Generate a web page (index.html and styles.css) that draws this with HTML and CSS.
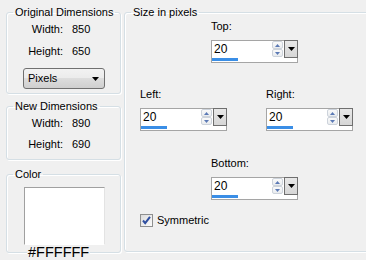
FILE: index.html
```html
<!DOCTYPE html>
<html lang="en">
<head>
  <meta charset="UTF-8">
  <title>Add Borders</title>
  <link rel="stylesheet" href="styles.css">
</head>
<body>
  <div class="left">
    <fieldset class="group g-orig">
      <legend>Original Dimensions</legend>
      <div class="dims">
        <span class="dim-label">Width:</span><span>850</span>
        <span class="dim-label">Height:</span><span>650</span>
      </div>
      <div class="select">
        <span>Pixels</span>
        <svg width="7" height="4" viewBox="0 0 7 4"><path d="M0 0h7L3.5 4z" fill="#000"/></svg>
      </div>
    </fieldset>

    <fieldset class="group g-new">
      <legend>New Dimensions</legend>
      <div class="dims">
        <span class="dim-label">Width:</span><span>890</span>
        <span class="dim-label">Height:</span><span>690</span>
      </div>
    </fieldset>

    <fieldset class="group g-color">
      <legend>Color</legend>
      <div class="swatch"></div>
      <span class="hex">#FFFFFF</span>
    </fieldset>
  </div>

  <fieldset class="group g-size">
    <legend>Size in pixels</legend>

    <div class="field field-top">
      <label>Top:</label>
      <div class="spin">
        <div class="spin-row">
          <span class="spin-text">20</span>
          <div class="spin-arrows">
            <span class="arrow"><svg width="5" height="3" viewBox="0 0 5 3"><path d="M2.5 0L5 3H0z"/></svg></span>
            <span class="arrow"><svg width="5" height="3" viewBox="0 0 5 3"><path d="M0 0h5L2.5 3z"/></svg></span>
          </div>
          <span class="spin-drop"><svg width="7" height="4" viewBox="0 0 7 4"><path d="M0 0h7L3.5 4z"/></svg></span>
        </div>
        <div class="spin-bar"><span class="fill"></span></div>
      </div>
    </div>

    <div class="row-mid">
      <div class="field">
        <label>Left:</label>
        <div class="spin">
          <div class="spin-row">
            <span class="spin-text">20</span>
            <div class="spin-arrows">
              <span class="arrow"><svg width="5" height="3" viewBox="0 0 5 3"><path d="M2.5 0L5 3H0z"/></svg></span>
              <span class="arrow"><svg width="5" height="3" viewBox="0 0 5 3"><path d="M0 0h5L2.5 3z"/></svg></span>
            </div>
            <span class="spin-drop"><svg width="7" height="4" viewBox="0 0 7 4"><path d="M0 0h7L3.5 4z"/></svg></span>
          </div>
          <div class="spin-bar"><span class="fill"></span></div>
        </div>
      </div>
      <div class="field">
        <label>Right:</label>
        <div class="spin">
          <div class="spin-row">
            <span class="spin-text">20</span>
            <div class="spin-arrows">
              <span class="arrow"><svg width="5" height="3" viewBox="0 0 5 3"><path d="M2.5 0L5 3H0z"/></svg></span>
              <span class="arrow"><svg width="5" height="3" viewBox="0 0 5 3"><path d="M0 0h5L2.5 3z"/></svg></span>
            </div>
            <span class="spin-drop"><svg width="7" height="4" viewBox="0 0 7 4"><path d="M0 0h7L3.5 4z"/></svg></span>
          </div>
          <div class="spin-bar"><span class="fill"></span></div>
        </div>
      </div>
    </div>

    <div class="field field-bottom">
      <label>Bottom:</label>
      <div class="spin">
        <div class="spin-row">
          <span class="spin-text">20</span>
          <div class="spin-arrows">
            <span class="arrow"><svg width="5" height="3" viewBox="0 0 5 3"><path d="M2.5 0L5 3H0z"/></svg></span>
            <span class="arrow"><svg width="5" height="3" viewBox="0 0 5 3"><path d="M0 0h5L2.5 3z"/></svg></span>
          </div>
          <span class="spin-drop"><svg width="7" height="4" viewBox="0 0 7 4"><path d="M0 0h7L3.5 4z"/></svg></span>
        </div>
        <div class="spin-bar"><span class="fill"></span></div>
      </div>
    </div>

    <div class="check-row">
      <span class="checkbox">
        <svg width="11" height="11" viewBox="0 0 11 11"><path d="M2 5.5l2.2 2.6L9 1.8" fill="none" stroke="#2f4fa0" stroke-width="2"/></svg>
      </span>
      <span>Symmetric</span>
    </div>
  </fieldset>
</body>
</html>
```

FILE: styles.css
```css
* {
  box-sizing: border-box;
}

body {
  margin: 0;
  height: 260px;
  overflow: hidden;
  background-color: #f0f0f0;
  font-family: 'Liberation Sans', Arial, sans-serif;
  font-size: 11px;
  line-height: 13px;
  color: #000;
  display: flex;
  align-items: flex-start;
}

.left {
  flex-shrink: 0;
  width: 115px;
  margin-left: 6px;
  padding-top: 6px;
  display: flex;
  flex-direction: column;
}

.group {
  margin: 0;
  padding: 0;
  min-inline-size: 0;
  border: 1px solid #d5dfe5;
  border-radius: 3px;
  box-shadow: inset 1px 1px 0 #fff, 1px 1px 0 #fff;
}

.group legend {
  margin-left: 6px;
  padding: 0 2px;
  line-height: 13px;
  white-space: nowrap;
}

.g-orig {
  height: 88px;
}

.g-new {
  height: 60px;
  margin-top: 6px;
}

.g-color {
  height: 85px;
  margin-top: 8px;
}

.dims {
  display: grid;
  grid-template-columns: 56px auto;
  column-gap: 9px;
  row-gap: 9px;
  padding-top: 4px;
}

.g-new .dims {
  row-gap: 8px;
}

.dim-label {
  text-align: right;
}

.select {
  width: 82px;
  height: 21px;
  margin: 10px 0 0 16px;
  padding: 0 3px 0 4px;
  border: 1px solid #707070;
  border-radius: 3px;
  background: linear-gradient(#f2f2f2, #ebebeb 50%, #dddddd 50%, #cfcfcf);
  display: flex;
  align-items: center;
  justify-content: space-between;
}

.select svg {
  margin-right: 2px;
}

.swatch {
  width: 81px;
  height: 58px;
  margin: 6px 0 0 17px;
  background-color: #fff;
  border: 1px solid;
  border-color: #a0a0a0 #e3e3e3 #fff #a0a0a0;
}

.hex {
  display: inline-block;
  margin-left: 20px;
  padding: 0 1px;
  font-size: 14.5px;
  line-height: 15px;
  background-color: #f0f0f0;
}

.g-size {
  flex-shrink: 0;
  width: 250px;
  height: 246px;
  margin: 6px 0 0 3px;
}

.field label {
  display: block;
  margin-bottom: 7px;
}

.field-top {
  margin: 1px 0 0 86px;
}

.row-mid {
  display: flex;
  gap: 39px;
  margin: 25px 0 0 15px;
}

.field-bottom {
  margin: 26px 0 0 86px;
}

.spin {
  width: 87px;
  height: 23px;
  border: 1px solid #a5a5a5;
  background-color: #fff;
  display: flex;
  flex-direction: column;
}

.spin-row {
  height: 16px;
  display: flex;
}

.spin-text {
  flex: 1;
  padding: 2px 0 0 2px;
  font-size: 12px;
}

.spin-arrows {
  width: 11px;
  display: flex;
  flex-direction: column;
  margin-right: 1px;
}

.arrow {
  height: 8px;
  border: 1px solid #cdd3db;
  border-radius: 2px;
  background: linear-gradient(#fafafa, #e9ecef);
  display: flex;
  align-items: center;
  justify-content: center;
  fill: #5b79b5;
}

.spin-drop {
  width: 14px;
  height: 18px;
  margin: -1px -1px 0 0;
  border: 1px solid #6f6f6f;
  background: linear-gradient(#e8e8e8, #d6d6d6);
  display: flex;
  align-items: center;
  justify-content: center;
  fill: #000;
}

.spin-bar {
  height: 3px;
  margin-top: 1px;
}

.spin-bar .fill {
  display: block;
  width: 26px;
  height: 3px;
  background-color: #3a8ee6;
}

.check-row {
  display: flex;
  align-items: center;
  gap: 4px;
  margin: 14px 0 0 15px;
}

.checkbox {
  width: 13px;
  height: 13px;
  border: 1px solid #8e8f8f;
  background: linear-gradient(135deg, #dcdcdc, #fbfbfb);
  display: flex;
  align-items: center;
  justify-content: center;
}
```
